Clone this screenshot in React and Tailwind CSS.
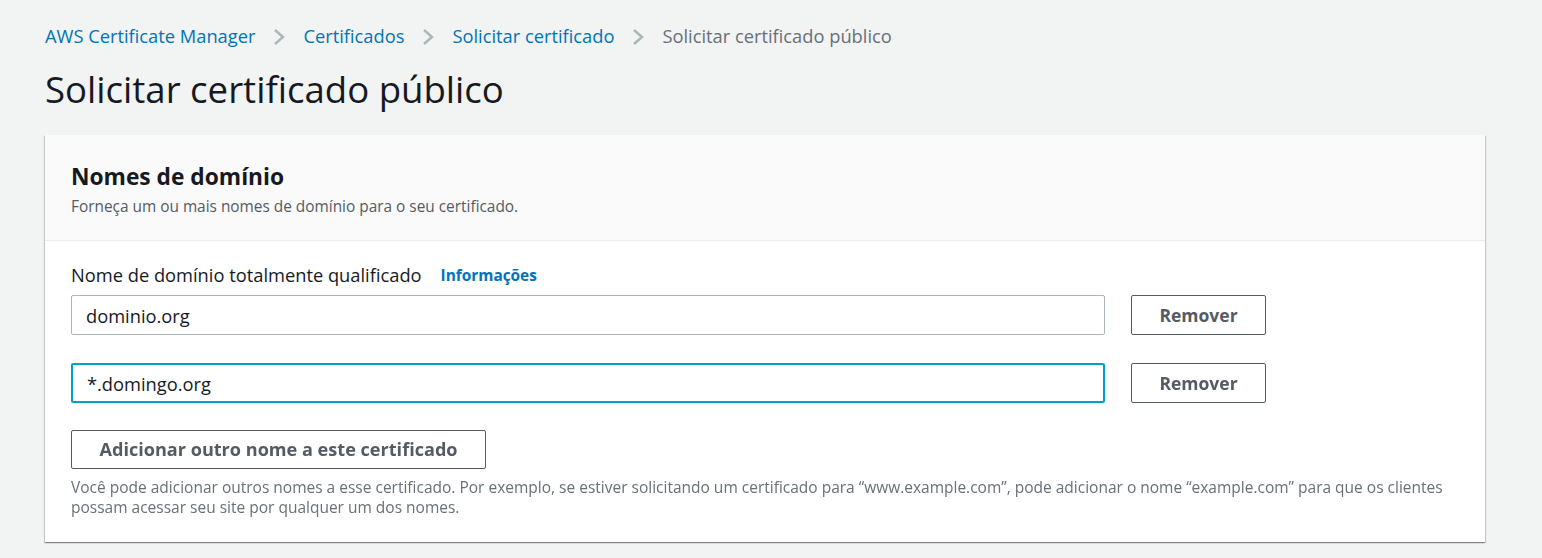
import React, { useState, useEffect, useRef } from 'react';

const Chevron = () => (
  <svg width="12" height="16" viewBox="0 0 12 16" className="shrink-0 mt-[2px]">
    <path d="M2 1 L10 8 L2 15" fill="none" stroke="#aab7b8" strokeWidth="2.4" />
  </svg>
);

const Breadcrumbs = () => (
  <nav className="flex items-center gap-[18px] text-[18.3px] leading-none">
    <a className="text-[#0073bb]">AWS Certificate Manager</a>
    <Chevron />
    <a className="text-[#0073bb]">Certificados</a>
    <Chevron />
    <a className="text-[#0073bb]">Solicitar certificado</a>
    <Chevron />
    <span className="text-[#687078]">Solicitar certificado público</span>
  </nav>
);

const App = () => {
  const [names, setNames] = useState(['dominio.org', '*.domingo.org']);
  const lastInput = useRef(null);

  // foco no último campo, cursor no fim
  useEffect(() => {
    const el = lastInput.current;
    if (el) {
      el.focus();
      el.setSelectionRange(el.value.length, el.value.length);
    }
  }, []);

  return (
    <div
      className="min-h-[558px] bg-[#f2f3f3] px-[45px] pt-[27px] pr-[57px] text-[#16191f]"
      style={{ fontFamily: '"Open Sans", "Noto Sans", sans-serif' }}
    >
      <Breadcrumbs />
      <h1 className="mt-[22px] text-[36.6px] leading-[44px] font-normal">Solicitar certificado público</h1>

      {/* Cartão de nomes de domínio */}
      <div className="mt-[24px] bg-white shadow-[0_1px_1px_0_rgba(0,28,36,0.3),1px_1px_1px_0_rgba(0,28,36,0.15),-1px_1px_1px_0_rgba(0,28,36,0.15)]">
        <div className="bg-[#fafafa] border-b border-[#eaeded] px-[26px] pt-[27px] pb-[23px]">
          <h2 className="text-[22.75px] leading-[30px] font-bold">Nomes de domínio</h2>
          <p className="mt-[5px] text-[15.4px] leading-[20px] text-[#545b64]">
            Forneça um ou mais nomes de domínio para o seu certificado.
          </p>
        </div>

        <div className="px-[26px] pt-[22px] pb-[25px]">
          <div className="flex items-center gap-[19px]">
            <label className="text-[18.3px] leading-[24px]">Nome de domínio totalmente qualificado</label>
            <a className="text-[15.4px] font-bold text-[#0073bb]">Informações</a>
          </div>

          <div className="mt-[8px] flex flex-col gap-[28px]">
            {names.map((name, i) => (
              <div key={i} className="flex items-center gap-[26px]">
                <input
                  ref={i === names.length - 1 ? lastInput : null}
                  value={name}
                  onChange={(e) => setNames(names.map((n, j) => (j === i ? e.target.value : n)))}
                  className={`h-[40px] w-[1034px] rounded-[2px] bg-white px-[14px] text-[18.3px] text-[#16191f] caret-[#16191f] outline-none ${
                    i === 1 ? 'border-2 border-[#00a1c9] px-[13px]' : 'border border-[#aab7b8]'
                  }`}
                />
                <button className="h-[40px] w-[135px] rounded-[2px] border border-[#545b64] bg-white text-[17.5px] font-bold text-[#545b64]">
                  Remover
                </button>
              </div>
            ))}
          </div>

          <button className="mt-[27px] h-[39px] w-[415px] rounded-[2px] border border-[#545b64] bg-white text-[18.1px] font-bold text-[#545b64]">
            Adicionar outro nome a este certificado
          </button>
          <p className="mt-[8px] text-[15.5px] leading-[20px] text-[#687078]">
            Você pode adicionar outros nomes a esse certificado. Por exemplo, se estiver solicitando um certificado para
            “www.example.com”, pode adicionar o nome “example.com” para que os clientes possam acessar seu site por
            qualquer um dos nomes.
          </p>
        </div>
      </div>
    </div>
  );
};

export default App;
